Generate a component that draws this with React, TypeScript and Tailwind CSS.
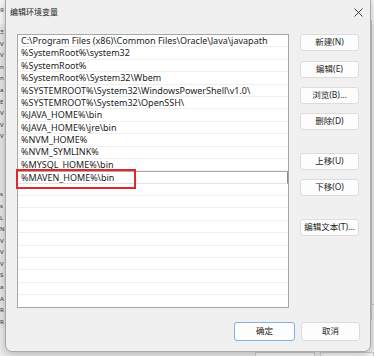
import React from "react";

const ROWS = [
  "C:\\Program Files (x86)\\Common Files\\Oracle\\Java\\javapath",
  "%SystemRoot%\\system32",
  "%SystemRoot%",
  "%SystemRoot%\\System32\\Wbem",
  "%SYSTEMROOT%\\System32\\WindowsPowerShell\\v1.0\\",
  "%SYSTEMROOT%\\System32\\OpenSSH\\",
  "%JAVA_HOME%\\bin",
  "%JAVA_HOME%\\jre\\bin",
  "%NVM_HOME%",
  "%NVM_SYMLINK%",
  "%MYSQL_HOME%\\bin",
];

const TOTAL_ROWS = 22;
const EDIT_ROW = 11;

// glyph fragments of the window behind the dialog
const BG_LINES = ["Ξ", "V", "V", "n", "n", "a", "E", "V", "V", "V", "", "", "", "", "s", "s", "L", "N", "V", "V", "V", "S", "a", "A", "R", "R"];

const font = "font-['Segoe_UI','Noto_Sans','Noto_Sans_CJK_SC',sans-serif]";

function Btn({ label }: { label: string }) {
  return (
    <div className="h-[17px] w-full flex items-center justify-center rounded-[3px] bg-[#fdfdfd] border border-[#dcdcdc] text-[8.5px] text-[#1b1b1b]">
      {label}
    </div>
  );
}

export default function App() {
  return (
    <div className={`relative w-[374px] h-[356px] overflow-hidden bg-[#ececec] ${font}`}>
      {/* background window behind the dialog */}
      <div className="absolute left-0 top-0 w-[374px] h-[24px] bg-[#f7f7f7]" />
      <div className="absolute left-0 top-[5px] text-[6px] leading-[8px] text-[#333]">g</div>
      <div className="absolute left-0 top-[27px] w-[5px] flex flex-col text-[6px] leading-[11.6px] text-[#333] bg-[#e6e6e6]">
        {BG_LINES.map((t, i) => (
          <div key={i} className="h-[11.6px]">
            {t}
          </div>
        ))}
      </div>
      <div className="absolute right-[2px] top-[20px] w-px h-[300px] bg-[#c8c8c8]" />
      <div className="absolute right-0 top-[304px] w-[6px] h-px bg-[#c8c8c8]" />
      <div className="absolute left-[255px] top-[352px] w-[60px] h-[6px] border border-[#d0d0d0] bg-[#f6f6f6]" />
      <div className="absolute left-[320px] top-[352px] w-[54px] h-[6px] border border-[#d0d0d0] bg-[#f6f6f6]" />

      {/* dialog */}
      <div className="absolute left-[5px] top-[-1px] w-[366px] h-[353px] rounded-b-[7px] border border-[#a8a8a8] bg-[#f0f0f0] shadow-[0_2px_8px_rgba(0,0,0,0.25)] flex flex-col">
        {/* title bar */}
        <div className="h-[23px] flex items-center justify-between pl-[4px] pr-[6px] pt-[1px]">
          <span className="text-[8px] text-[#1b1b1b]">编辑环境变量</span>
          <svg width="9" height="9" viewBox="0 0 9 9" className="mr-[1px]">
            <path d="M0.5 0.5 L8.5 8.5 M8.5 0.5 L0.5 8.5" stroke="#2b2b2b" strokeWidth="0.9" />
          </svg>
        </div>

        <div className="flex pl-[11px] pr-[10px] pt-[11px] gap-[11px]">
          {/* list box */}
          <div className="w-[272px] h-[274px] border border-[#a6a6a6] bg-white flex flex-col overflow-hidden">
            {Array.from({ length: TOTAL_ROWS }).map((_, i) => {
              const text = i === EDIT_ROW ? "%MAVEN_HOME%\\bin" : ROWS[i] ?? "";
              return (
                <div
                  key={i}
                  className={`h-[12.4px] shrink-0 flex items-center pl-[3px] text-[9px] text-[#1b1b1b] whitespace-nowrap border-b ${
                    i === EDIT_ROW
                      ? "border-t border-r border-t-[#a9a9a9] border-r-[#8a8a8a] border-b-[#e2e2e2]"
                      : "border-b-[#efefef]"
                  }`}
                >
                  {text}
                </div>
              );
            })}
          </div>

          {/* side buttons */}
          <div className="w-[59px] flex flex-col">
            <Btn label="新建(N)" />
            <div className="h-[10px]" />
            <Btn label="编辑(E)" />
            <div className="h-[9px]" />
            <Btn label="浏览(B)..." />
            <div className="h-[9px]" />
            <Btn label="删除(D)" />
            <div className="h-[23px]" />
            <Btn label="上移(U)" />
            <div className="h-[9px]" />
            <Btn label="下移(O)" />
            <div className="h-[23px]" />
            <Btn label="编辑文本(T)..." />
          </div>
        </div>

        {/* bottom buttons */}
        <div className="flex justify-end gap-[6px] pr-[10px] mt-[14px]">
          <div className="w-[61px] h-[19px] flex items-center justify-center rounded-[3px] bg-[#fdfdfd] border border-[#7fb3e0] text-[8.5px] text-[#1b1b1b]">
            确定
          </div>
          <div className="w-[59px] h-[19px] flex items-center justify-center rounded-[3px] bg-[#fdfdfd] border border-[#dcdcdc] text-[8.5px] text-[#1b1b1b]">
            取消
          </div>
        </div>
      </div>

      {/* red annotation box */}
      <div className="absolute left-[16px] top-[169px] w-[120px] h-[20px] border-2 border-[#e3262b]" />
    </div>
  );
}
